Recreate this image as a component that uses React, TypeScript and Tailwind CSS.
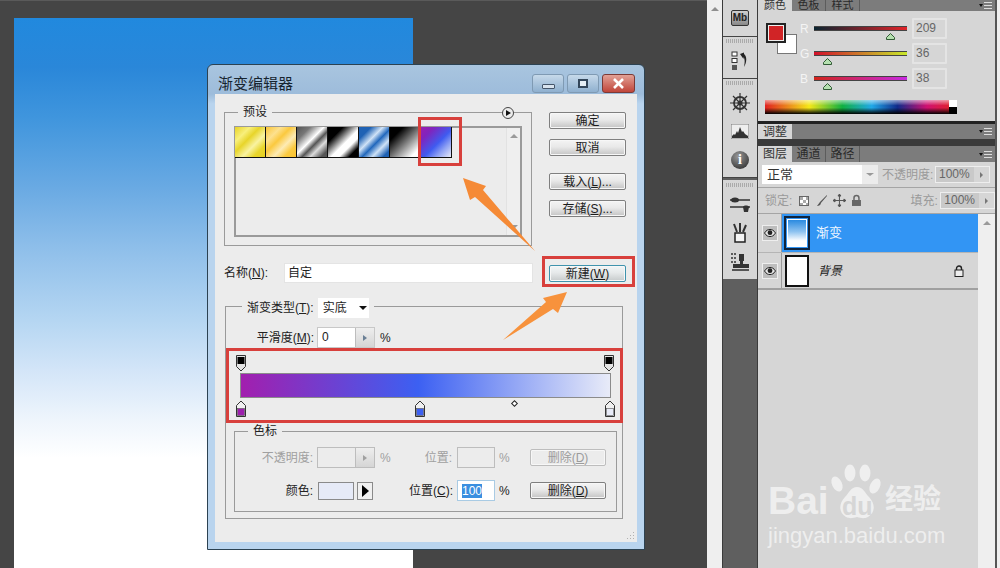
import React from "react";

const Btn = ({ children, w = "w-[77px]", dim = false, glow = false }: { children: React.ReactNode; w?: string; dim?: boolean; glow?: boolean }) => (
  <div
    className={`${w} h-[17px] rounded-[2px] border flex items-center justify-center text-[12px] leading-none shadow-[inset_0_0_0_1px_#f7f7f7] ${
      dim
        ? "border-[#bdbdbd] bg-[#ececec] text-[#9c9c9c]"
        : glow
          ? "border-[#3f93ad] bg-[linear-gradient(180deg,#f2f6f7_0%,#e6e9ea_45%,#c6cacb_100%)] text-[#1c1c1c]"
          : "border-[#7f7f7f] bg-[linear-gradient(180deg,#f4f4f4_0%,#e9e9e9_45%,#c4c4c4_100%)] text-[#1c1c1c]"
    }`}
  >
    {children}
  </div>
);

const StopTop = () => (
  <svg width="12" height="17" viewBox="0 0 12 17">
    <path d="M1.5 .5h9v11l-4.500 4.500-4.500-4.500z" fill="#e4e4e4" stroke="#333" />
    <rect x="2.500" y="2" width="7" height="7" fill="#000" />
  </svg>
);

const StopBottom = ({ color }: { color: string }) => (
  <svg width="12" height="17" viewBox="0 0 12 17">
    <path d="M1.500 16.500v-11l4.500-4.500 4.500 4.500v11z" fill="#f0f0f0" stroke="#333" />
    <rect x="2.500" y="8.500" width="7" height="7" fill={color} stroke="#555" strokeWidth=".6" />
  </svg>
);

const Stepper = ({ dim = false, value = "" }: { dim?: boolean; value?: string }) => (
  <div className={`w-[58px] h-[21px] flex border ${dim ? "border-[#bdbdbd] bg-[#ececec]" : "border-[#c8c8c8] bg-white"}`}>
    <div className="flex-1 pl-[4px] text-[12px] leading-[19px] text-[#222]">{value}</div>
    <div className="w-[19px] border-l border-[#bdbdbd] bg-[linear-gradient(180deg,#eeeeee,#d5d5d5)] flex items-center justify-center">
      <div className={`w-0 h-0 border-y-[3px] border-y-transparent border-l-[4px] ${dim ? "border-l-[#a0a0a0]" : "border-l-[#6a7f95]"}`} />
    </div>
  </div>
);

const Group = ({ title, className, children }: { title?: string; className: string; children: React.ReactNode }) => (
  <div className={`relative border border-[#9a9a9a] ${className}`}>
    {title && <div className="absolute left-[13px] -top-[9px] bg-[#ececec] px-[5px] text-[12px] leading-[16px] text-[#222]">{title}</div>}
    {children}
  </div>
);

const swatches = [
  "bg-[linear-gradient(135deg,#e8d325_0%,#f8ef7c_25%,#e8d52a_42%,#f9f3a2_62%,#e9d62c_80%,#e6d020_100%)]",
  "bg-[linear-gradient(135deg,#fbc536_0%,#fde18f_25%,#fbc93f_42%,#fdebb5_62%,#fbca40_80%,#fbc431_100%)]",
  "bg-[linear-gradient(135deg,#555_0%,#777_22%,#fff_45%,#555_58%,#ddd_72%,#555_90%)]",
  "bg-[linear-gradient(135deg,#000_0%,#000_25%,#fff_55%,#fff_68%,#000_85%,#000_100%)]",
  "bg-[linear-gradient(135deg,#1f62b4_0%,#1f62b4_20%,#cfe2f6_40%,#2268bc_55%,#cfe2f6_72%,#1f62b4_90%)]",
  "bg-[linear-gradient(135deg,#000_0%,#000_22%,#fff_85%,#fff_100%)]",
  "bg-[linear-gradient(135deg,#9a1fb0_0%,#8024bd_22%,#3f5bf0_55%,#8fa2f4_75%,#e8ebf8_100%)]",
];

const Tabs = ({ tabs, h, size = "text-[12px]" }: { tabs: string[]; h: string; size?: string }) => (
  <div className={`${h} shrink-0 bg-[#7c7c7c] flex items-end overflow-hidden relative`}>
    {tabs.map((t, i) => (
      <div
        key={t}
        className={`h-full w-[34px] shrink-0 flex justify-center items-center leading-none ${size} ${
          i === 0 ? "bg-[#d6d6d6] text-[#333]" : "border-r border-[#5c5c5c] text-[#2a2a2a]"
        }`}
      >
        {t}
      </div>
    ))}
    <div className="ml-auto mr-[3px] self-center flex items-center gap-[1px]">
      <div className="w-0 h-0 border-x-[2px] border-x-transparent border-t-[3px] border-t-[#111]" />
      <div className="w-[8px] h-[7px] border-y border-[#ddd] relative after:absolute after:left-0 after:right-0 after:top-[2px] after:h-px after:bg-[#ddd]" />
    </div>
  </div>
);

const Slider = ({ label, track, pos, value }: { label: string; track: string; pos: string; value: string }) => (
  <div className="h-[25px] flex items-center">
    <div className="w-[14px] text-[12px] text-[#f4f4f4] leading-none">{label}</div>
    <div className="w-[93px] relative h-[20px] flex items-center">
      <div className={`w-full h-[5px] border-y border-[#444] ${track}`} />
      <svg className={`absolute top-[14px] ${pos}`} width="9" height="7" viewBox="0 0 9 7">
        <path d="M4.500 .5l4 4v2h-8v-2z" fill="#b5e0b0" stroke="#315a35" />
      </svg>
    </div>
    <div className="ml-[5px] w-[35px] h-[21px] border-2 border-[#e4e4e4] rounded-[1px] text-[12px] leading-[16px] text-[#666] pl-[2px]">{value}</div>
  </div>
);

const Eye = () => (
  <div className="w-[16px] h-[16px] bg-[#bdbdbd] border border-[#eee] flex items-center justify-center">
    <svg width="12" height="8" viewBox="0 0 12 8">
      <path d="M.5 4C2.500 1 4 .5 6 .5S9.500 1 11.500 4C9.500 7 8 7.500 6 7.500S2.500 7 .5 4z" fill="#e8e8e8" stroke="#222" />
      <circle cx="6" cy="3.700" r="2.400" fill="#222" />
    </svg>
  </div>
);

const Dock = ({ className, children }: { className: string; children: React.ReactNode }) => (
  <div className={`bg-[#d6d6d6] flex flex-col items-center border-b border-[#444] ${className}`}>{children}</div>
);

export default function App() {
  return (
    <div className="w-[1000px] h-[568px] overflow-hidden flex bg-[#454545] [font-family:'Liberation_Sans','Noto_Sans_CJK_SC',sans-serif]">
      {/* canvas */}
      <div className="relative w-[707px] h-full pl-[14px] pt-[18px] border-t border-[#5a5a5a]">
        <div className="w-[399px] h-[550px] -mt-[1px] bg-[linear-gradient(180deg,#2189de_0%,#2a87d9_9%,#3f95dd_18%,#6aaae3_31%,#8fbfea_42%,#b5d6f2_55%,#d3e5f8_64%,#eef5fc_73%,#ffffff_80%,#ffffff_100%)]" />

        {/* dialog */}
        <div className="absolute left-[207px] top-[63px] w-[438px] h-[486px] rounded-t-[6px] border border-[#2c4252] flex flex-col bg-[linear-gradient(180deg,#a9c5df_0%,#9dbcdb_6%,#b9d4ee_8%,#b9d4ee_100%)]">
          <div className="h-[29px] shrink-0 flex items-center pl-[10px] pr-[9px]">
            <div className="text-[15px] leading-none text-[#16242f] mt-[8px]">渐变编辑器</div>
            <div className="ml-auto flex gap-[3px] mt-[7px]">
              <div className="w-[32px] h-[19px] rounded-[3px] border border-[#7f9ab3] bg-[linear-gradient(180deg,#c6d9ea,#8fb0cf)] flex items-end justify-center pb-[3px]">
                <div className="w-[13px] h-[5px] rounded-[1px] border border-[#44556a] bg-[#d8e3ee]" />
              </div>
              <div className="w-[32px] h-[19px] rounded-[3px] border border-[#7f9ab3] bg-[linear-gradient(180deg,#c6d9ea,#8fb0cf)] flex items-center justify-center">
                <div className="w-[10px] h-[9px] border-2 border-[#33465a] bg-[#e6eef5]" />
              </div>
              <div className="w-[33px] h-[19px] rounded-[3px] border border-[#7c3a36] bg-[linear-gradient(180deg,#e2a196,#c0453a)] flex items-center justify-center">
                <svg width="13" height="11" viewBox="0 0 13 11"><path d="M2 1l9 9M11 1l-9 9" stroke="#fff" strokeWidth="2.600" /></svg>
              </div>
            </div>
          </div>
          <div className="mx-[7px] h-[448px] bg-[#ececec] pt-[18px] pl-[9px] relative">
            {/* preset row */}
            <div className="flex">
              <Group title="预设" className="w-[308px] h-[134px] pt-[13px] pl-[10px]">
                <div className="absolute right-[17px] -top-[6px] w-[12px] h-[12px] rounded-full bg-[#ececec] border border-[#444] flex items-center justify-center">
                  <div className="w-0 h-0 border-y-[3px] border-y-transparent border-l-[5px] border-l-[#111]" />
                </div>
                <div className="w-[288px] h-[111px] border-2 border-[#9a9a9a] -ml-[1px] flex bg-[#ececec]">
                  <div className="flex-1 flex items-start -ml-px -mt-px">
                    {swatches.map((s) => (
                      <div key={s} className={`w-[31px] h-[31px] border-r border-b border-[#111] shrink-0 ${s}`} />
                    ))}
                  </div>
                  <div className="w-[14px] flex flex-col items-center justify-between py-[6px] bg-[#efefef] border-l border-[#e2e2e2]">
                    <div className="w-0 h-0 border-x-[4px] border-x-transparent border-b-[4px] border-b-[#9a9a9a]" />
                    <div className="w-0 h-0 border-x-[4px] border-x-transparent border-t-[4px] border-t-[#9a9a9a]" />
                  </div>
                </div>
              </Group>
              <div className="ml-[17px] flex flex-col">
                <Btn>确定</Btn>
                <div className="mt-[10px]"><Btn>取消</Btn></div>
                <div className="mt-[17px]"><Btn>载入(<u>L</u>)...</Btn></div>
                <div className="mt-[10px]"><Btn>存储(<u>S</u>)...</Btn></div>
              </div>
            </div>

            {/* name row */}
            <div className="flex mt-[17px] items-start">
              <div className="w-[60px] text-[12px] leading-[20px] text-[#222]">名称(<u>N</u>):</div>
              <div className="w-[249px] h-[20px] bg-white border border-[#e4e4e4] pl-[3px] text-[12px] leading-[18px] text-[#222]">自定</div>
              <div className="ml-[16px] mt-[2px]"><Btn glow>新建(<u>W</u>)</Btn></div>
            </div>

            {/* gradient group */}
            <div className="relative mt-[23px] ml-[1px] w-[398px] h-[213px] border border-[#9a9a9a]">
              <div className="-mt-[9px] ml-[16px] w-fit h-[20px] bg-[#ececec] px-[5px] flex items-center text-[12px] text-[#222]">
                <span>渐变类型(<u>T</u>):</span>
                <div className="ml-[4px] w-[51px] h-[20px] bg-white flex items-center pl-[5px]">
                  实底
                  <div className="ml-[12px] w-0 h-0 border-x-[4px] border-x-transparent border-t-[4px] border-t-[#111]" />
                </div>
              </div>
              <div className="flex items-center mt-[9px] h-[21px] -mb-px">
                <div className="w-[91px] text-right pr-[3px] text-[12px] text-[#222]">平滑度(<u>M</u>):</div>
                <Stepper value="0" />
                <div className="pl-[5px] text-[12px] text-[#222]">%</div>
              </div>

              {/* gradient editor */}
              <div className="relative h-[75px] border-[3px] border-[#d8403c] w-[397px] mt-[1px]">
                <div className="flex justify-between pl-[6px] pr-[5px] pt-[4px]">
                  <StopTop />
                  <StopTop />
                </div>
                <div className="ml-[11px] mt-[1px] w-[371px] h-[25px] border border-[#8b8b8b] bg-[linear-gradient(90deg,#a21fae_0%,#3c60f2_48%,#e8ebf8_100%)]" />
                <div className="absolute left-[6px] top-[49px]"><StopBottom color="#9d1fae" /></div>
                <div className="absolute left-[185px] top-[49px]"><StopBottom color="#3c60f2" /></div>
                <div className="absolute left-[375px] top-[49px]"><StopBottom color="#e8ebf8" /></div>
                <div className="absolute left-[283px] top-[50px] w-[5px] h-[5px] rotate-45 border border-[#222] bg-white" />
              </div>

              {/* color stop group */}
              <Group title="色标" className="ml-[8px] mt-[8px] w-[383px] h-[81px] pt-[15px]">
                <div className="flex items-center h-[21px] text-[12px] text-[#a0a0a0]">
                  <div className="w-[82px] text-right pr-[4px] whitespace-nowrap">不透明度:</div>
                  <Stepper dim />
                  <div className="w-[51px] pl-[5px]">%</div>
                  <div className="w-[31px] pr-[5px] flex justify-end whitespace-nowrap">位置:</div>
                  <div className="w-[38px] h-[21px] border border-[#bdbdbd]" />
                  <div className="w-[35px] pl-[4px]">%</div>
                  <Btn w="w-[76px]" dim>删除(<u>D</u>)</Btn>
                </div>
                <div className="flex items-center h-[21px] mt-[12px] text-[12px] text-[#222]">
                  <div className="w-[82px] pr-[4px] flex justify-end">颜色:</div>
                  <div className="w-[58px] flex gap-[3px] pl-px">
                    <div className="w-[36px] h-[18px] border border-[#8a8a8a] bg-[#e6eaf7]" />
                    <div className="w-[16px] h-[18px] border border-[#8a8a8a] bg-[#f0f0f0] flex items-center justify-center">
                      <div className="w-0 h-0 border-y-[6px] border-y-transparent border-l-[7px] border-l-[#000]" />
                    </div>
                  </div>
                  <div className="w-[51px]" />
                  <div className="w-[31px] pr-[4px] flex justify-end whitespace-nowrap">位置(<u>C</u>):</div>
                  <div className="w-[38px] h-[21px] bg-white border border-[#a9cbe4] pl-[4px] flex items-center">
                    <span className="bg-[#3a8fe0] text-white leading-[14px]">100</span>
                  </div>
                  <div className="w-[35px] pl-[4px]">%</div>
                  <Btn w="w-[76px]">删除(<u>D</u>)</Btn>
                </div>
              </Group>
            </div>
            <svg className="absolute right-[2px] bottom-[2px]" width="9" height="9" viewBox="0 0 9 9">
              <path d="M7 1h1v1H7zM7 4h1v1H7zM4 4h1v1H4zM7 7h1v1H7zM4 7h1v1H4zM1 7h1v1H1z" fill="#b0b0b0" />
            </svg>
          </div>
        </div>
      </div>

      {/* annotations over the dialog */}
      <div className="absolute left-[418px] top-[117px] w-[44px] h-[49px] border-[3px] border-[#d8403c]" />
      <div className="absolute left-[542px] top-[256px] w-[93px] h-[31px] border-[3px] border-[#d8403c]" />
      <svg className="absolute left-[455px] top-[170px]" width="120" height="180" viewBox="0 0 120 180">
        <path d="M8 8L31 16 28 20 80 81 20 27 15 30z" fill="#f58a36" />
        <path d="M112 122L88 128 91 132 48 170 98 139 103 143z" fill="#f7923c" />
      </svg>

      {/* outer scrollbar */}
      <div className="w-[15px] h-full bg-[#efefef] flex justify-center pt-[7px]">
        <div className="w-0 h-0 border-x-[4px] border-x-transparent border-b-[4px] border-b-[#8f8f8f]" />
      </div>
      <div className="w-px h-full bg-[#3b3b3b]" />

      {/* dock */}
      <div className="w-[34px] h-full bg-[#5f5f5f] flex flex-col">
        <Dock className="h-[37px] pt-[10px]">
          <div className="w-[18px] h-[16px] rounded-[2px] border border-[#333] bg-[linear-gradient(180deg,#d0d0d0,#888)] text-[10px] leading-[14px] text-center font-bold text-[#222]">Mb</div>
        </Dock>
        <Dock className="h-[42px] pt-[2px]">
          <div className="w-[28px] h-[4px] bg-[repeating-linear-gradient(90deg,#aaa_0px,#aaa_1px,transparent_1px,transparent_2px)]" />
          <svg className="mt-[8px]" width="18" height="20" viewBox="0 0 18 20">
            <rect x="1" y="1" width="5" height="4" fill="#fff" stroke="#333" />
            <rect x="1" y="7.500" width="5" height="4" fill="#fff" stroke="#333" />
            <rect x="1" y="14" width="5" height="5" fill="#555" />
            <path d="M9 3l4-1.500V3c3 2 3 8 0 13 1-5 1-8-.5-10v2z" fill="#222" />
          </svg>
        </Dock>
        <Dock className="h-[99px] pt-[2px]">
          <div className="w-[28px] h-[4px] bg-[repeating-linear-gradient(90deg,#aaa_0px,#aaa_1px,transparent_1px,transparent_2px)]" />
          <svg className="mt-[8px]" width="20" height="20" viewBox="0 0 20 20">
            <circle cx="10" cy="10" r="6" fill="none" stroke="#333" strokeWidth="1.800" />
            <circle cx="10" cy="10" r="2.500" fill="#333" />
            <path d="M10 0v20M0 10h20M3 3l14 14M17 3L3 17" stroke="#333" strokeWidth="1.200" />
          </svg>
          <svg className="mt-[11px]" width="18" height="15" viewBox="0 0 18 15">
            <rect width="18" height="15" fill="#eee" stroke="#777" />
            <path d="M1 14V12l2-2 1 1 2-4 1 2 2-6 2 5 1-1 2 3 3 2v2z" fill="#333" />
          </svg>
          <div className="mt-[12px] w-[18px] h-[18px] rounded-full bg-[radial-gradient(circle_at_40%_30%,#999,#222)] text-white text-[14px] leading-[18px] font-bold text-center [font-family:'Liberation_Serif',serif]">i</div>
        </Dock>
        <Dock className="h-[99px] pt-[3px] mt-[2px] border-b-0">
          <div className="w-[28px] h-[4px] bg-[repeating-linear-gradient(90deg,#aaa_0px,#aaa_1px,transparent_1px,transparent_2px)]" />
          <svg className="mt-[10px]" width="20" height="16" viewBox="0 0 20 16">
            <path d="M0 3h20M0 10h20" stroke="#333" strokeWidth="1.500" />
            <ellipse cx="5" cy="3" rx="4" ry="2.500" fill="#333" />
            <path d="M13 10c0-2 6-2 6 0l-1 5h-4z" fill="#333" />
          </svg>
          <svg className="mt-[10px]" width="18" height="20" viewBox="0 0 18 20">
            <path d="M3 1l3 8M9 0v9M15 2l-3 7" stroke="#333" strokeWidth="2" />
            <rect x="4" y="10" width="10" height="9" fill="#f4f4f4" stroke="#222" strokeWidth="1.500" />
          </svg>
          <svg className="mt-[10px]" width="20" height="18" viewBox="0 0 20 18">
            <path d="M1 1h5M1 5h5M1 9h5" stroke="#333" strokeWidth="1.500" strokeDasharray="2 1" />
            <path d="M9 1h5v7h-1v3h6v4H3v-4h7V8H9z" fill="#333" />
            <rect x="2" y="16" width="17" height="2" fill="#555" />
          </svg>
        </Dock>
      </div>

      {/* panels */}
      <div className="relative w-[238px] h-full border-l border-[#3b3b3b] flex flex-col bg-[#d6d6d6]">
        <Tabs tabs={["颜色", "色板", "样式"]} h="h-[11px]" size="text-[11px]" />
        <div className="h-[110px] shrink-0 flex flex-col">
          <div className="flex pt-[5px]">
            <div className="w-[35px] relative ml-[7px] h-[36px] shrink-0">
              <div className="absolute left-[12px] top-[18px] w-[20px] h-[20px] bg-white border border-[#777]" />
              <div className="absolute left-px top-[7px] w-[20px] h-[20px] bg-[#d12426] border-2 border-[#222] shadow-[inset_0_0_0_1px_#eee]" />
            </div>
            <div className="flex flex-col">
              <Slider label="R" track="bg-[linear-gradient(90deg,#0a2430,#e2242a)]" pos="left-[72px]" value="209" />
              <Slider label="G" track="bg-[linear-gradient(90deg,#d1102a,#c8e82a)]" pos="left-[9px]" value="36" />
              <Slider label="B" track="bg-[linear-gradient(90deg,#d1241a,#c82ae2)]" pos="left-[9px]" value="38" />
            </div>
          </div>
          <div className="ml-[7px] mt-[9px] w-[192px] h-[14px] flex">
            <div className="w-[184px] h-full bg-[linear-gradient(180deg,rgba(255,255,255,.55)_0%,rgba(255,255,255,0)_40%,rgba(0,0,0,0)_55%,rgba(0,0,0,1)_100%),linear-gradient(90deg,#e02020_0%,#f5e818_24%,#10b040_42%,#20a8e8_58%,#102a8a_72%,#d01070_88%,#e02030_100%)]" />
            <div className="w-[8px] h-full flex flex-col">
              <div className="flex-1 bg-white" />
              <div className="flex-1 bg-black" />
            </div>
          </div>
        </div>
        <div className="h-[3px] shrink-0 bg-[#222]" />
        <Tabs tabs={["调整"]} h="h-[15px]" />
        <div className="h-[7px] shrink-0 bg-[#3a3a3a]" />
        <Tabs tabs={["图层", "通道", "路径"]} h="h-[16px]" />
        <div className="h-[26px] shrink-0 border-b border-[#a5a5a5] flex items-center pl-[4px] text-[12px]">
          <div className="w-[116px] h-[19px] bg-white flex items-center">
            <span className="pl-[5px] flex-1 text-[#333] text-[13px] leading-none">正常</span>
            <div className="w-[16px] h-full bg-[#ececec] flex items-center justify-center">
              <div className="w-0 h-0 border-x-[4px] border-x-transparent border-t-[3px] border-t-[#999]" />
            </div>
          </div>
          <span className="ml-[4px] w-[53px] text-[#9a9a9a] whitespace-nowrap">不透明度:</span>
          <div className="w-[55px] h-[17px] border border-[#eee] flex text-[12px] leading-[15px] text-[#666]">
            <span className="w-[38px] bg-[#c9c9c9] pl-[3px]">100%</span>
            <span className="flex-1 flex items-center justify-center"><span className="w-0 h-0 border-y-[3px] border-y-transparent border-l-[3px] border-l-[#777]" /></span>
          </div>
        </div>
        <div className="h-[26px] shrink-0 flex items-center pl-[7px] text-[12px] text-[#9a9a9a] border-b border-[#a5a5a5]">
          <span className="w-[34px]">锁定:</span>
          <div className="w-[10px] h-[10px] border border-[#666] bg-[conic-gradient(#fff_25%,#aaa_0_50%,#fff_0_75%,#aaa_0)] bg-[length:6px_6px]" />
          <svg className="ml-[6px]" width="13" height="13" viewBox="0 0 13 13"><path d="M12 1L5 8 2 12c2 0 4-1 4-3l6-7z" fill="#555" /></svg>
          <svg className="ml-[5px]" width="13" height="13" viewBox="0 0 13 13"><path d="M6.500 0v13M0 6.500h13M6.500 0L5 2h3zM6.500 13L5 11h3zM0 6.500L2 5v3zM13 6.500L11 5v3z" stroke="#555" fill="#555" /></svg>
          <svg className="ml-[5px]" width="11" height="13" viewBox="0 0 11 13"><path d="M3 6V4a2.500 2.500 0 015 0v2" fill="none" stroke="#666" strokeWidth="1.500" /><rect x="1" y="6" width="9" height="6" fill="#666" /></svg>
          <span className="ml-[49px] w-[30px]">填充:</span>
          <div className="w-[55px] h-[17px] border border-[#eee] flex text-[12px] leading-[15px] text-[#666]">
            <span className="w-[38px] bg-[#c9c9c9] pl-[3px]">100%</span>
            <span className="flex-1 flex items-center justify-center"><span className="w-0 h-0 border-y-[3px] border-y-transparent border-l-[3px] border-l-[#777]" /></span>
          </div>
        </div>
        <div className="flex flex-1">
          <div className="w-[220px]">
            <div className="h-[38px] flex">
              <div className="w-[24px] flex items-center justify-center border-r border-[#9a9a9a]"><Eye /></div>
              <div className="flex-1 bg-[#3295f4] flex items-center pl-[2px]">
                <div className="w-[26px] h-[34px] border-2 border-[#10243c] p-px">
                  <div className="w-full h-full border border-white bg-[linear-gradient(180deg,#2a8ae0_0%,#8fc3f0_45%,#ffffff_80%)]" />
                </div>
                <span className="ml-[6px] text-[13px] text-[#eef6ff]">渐变</span>
              </div>
            </div>
            <div className="h-[38px] flex border-t border-[#b5b5b5] border-b-2 border-b-[#a0a0a0]">
              <div className="w-[24px] flex items-center justify-center border-r border-[#9a9a9a]"><Eye /></div>
              <div className="flex-1 flex items-center pl-[3px]">
                <div className="w-[24px] h-[32px] border-2 border-[#111] bg-white" />
                <span className="ml-[9px] text-[12px] italic text-[#222]">背景</span>
                <svg className="ml-auto mr-[14px]" width="10" height="12" viewBox="0 0 10 12">
                  <path d="M2.500 5V3.500a2.500 2.500 0 015 0V5" fill="none" stroke="#222" strokeWidth="1.400" />
                  <rect x="1" y="5" width="8" height="6.500" fill="#eee" stroke="#222" />
                </svg>
              </div>
            </div>
          </div>
          <div className="flex-1 bg-[#efefef] flex justify-center pt-[7px]">
            <div className="w-0 h-0 border-x-[4px] border-x-transparent border-b-[4px] border-b-[#9a9a9a]" />
          </div>
        </div>

        {/* watermark */}
        <div className="absolute left-[10px] top-[460px] w-[190px] h-[95px] text-white/60">
          <div className="absolute left-0 top-[21px] text-[39px] leading-[40px] font-bold">Bai</div>
          <svg className="absolute left-[60px] top-0" width="60" height="62" viewBox="0 0 60 62" fill="currentColor">
            <ellipse cx="9" cy="24" rx="5" ry="8" transform="rotate(-25 9 24)" />
            <ellipse cx="22" cy="13" rx="5.500" ry="8.500" />
            <ellipse cx="37" cy="13" rx="5.500" ry="8.500" />
            <ellipse cx="47" cy="26" rx="5" ry="8" transform="rotate(25 47 26)" />
            <path d="M29 27c6 0 8 6 12 10 6 6 7 15-1 20-4 2-7 1-11 0-4 1-7 2-11 0-8-5-7-14-1-20 4-4 6-10 12-10z" />
          </svg>
          <div className="absolute left-[74px] top-[33px] text-[25px] leading-[26px] font-bold text-[#d6d6d6]">du</div>
          <div className="absolute left-[117px] top-[24px] text-[28px] leading-[32px] font-bold">经验</div>
          <div className="absolute left-0 top-[63px] text-[22px] leading-[26px] whitespace-nowrap">jingyan.baidu.com</div>
        </div>
      </div>
      <div className="w-[5px] h-full border-l-2 border-[#555] bg-[#efefef]" />
    </div>
  );
}
